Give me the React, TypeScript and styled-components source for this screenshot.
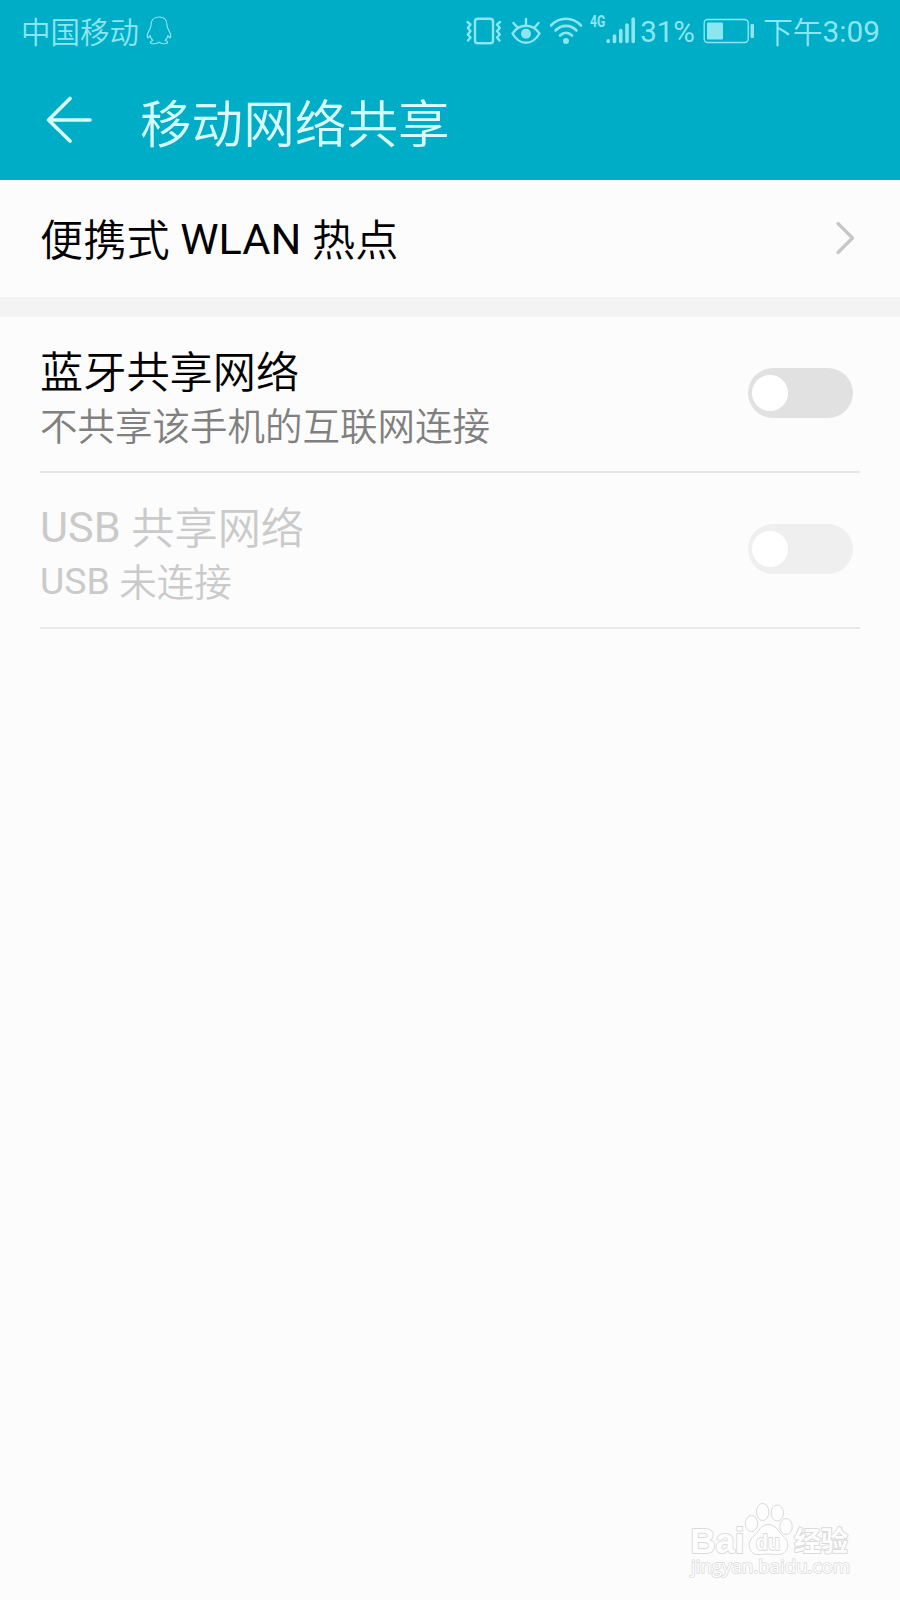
import React from "react";
import styled, { createGlobalStyle } from "styled-components";

const GlobalStyle = createGlobalStyle`
  *, *::before, *::after { box-sizing: border-box; }
  html, body { margin: 0; padding: 0; background: #fcfcfc; }
  body { font-family: Roboto, "Noto Sans CJK SC", sans-serif; }
`;

const Screen = styled.div`
  position: relative;
  display: flex;
  flex-direction: column;
  width: 900px;
  height: 1600px;
  overflow: hidden;
  background: #fcfcfc;
`;

const Header = styled.header`
  display: flex;
  flex-direction: column;
  height: 180px;
  background: #00adc7;
`;

const StatusBar = styled.div`
  display: flex;
  align-items: center;
  justify-content: space-between;
  height: 62px;
  padding: 0 20px 0 21px;
  color: #8ce6f0;
`;

const StatusGroup = styled.div`
  display: flex;
  align-items: center;
  white-space: nowrap;
`;

const StatusText = styled.span<{ $left?: number; $size?: number }>`
  margin-left: ${({ $left = 0 }) => $left}px;
  padding-top: 2px;
  font-size: ${({ $size = 29.5 }) => $size}px;
  line-height: 60px;
`;

const Han = styled.span<{ $drop?: number }>`
  font-weight: 350;
  line-height: 1;
  vertical-align: -${({ $drop = 2 }) => $drop}px;
`;

const StatusIcon = styled.svg<{ $left?: number; $lift?: number }>`
  display: block;
  flex: none;
  margin-left: ${({ $left = 0 }) => $left}px;
  margin-bottom: ${({ $lift = 0 }) => $lift}px;
  fill: none;
  stroke: currentColor;
  stroke-linecap: round;
  stroke-linejoin: round;
`;

const NetworkType = styled.span`
  align-self: flex-start;
  margin: 14px 0 0 7px;
  width: 16px;
  font-size: 16px;
  font-weight: 700;
  line-height: 16px;
  transform: scaleX(0.76);
  transform-origin: left;
`;

const TitleBar = styled.div`
  display: flex;
  align-items: center;
  height: 118px;
  padding-left: 46px;
`;

const BackIcon = styled.svg`
  display: block;
  flex: none;
  margin-bottom: 2px;
  fill: none;
  stroke: #d8fcff;
  stroke-width: 3.6;
  stroke-linecap: round;
  stroke-linejoin: round;
`;

const Title = styled.h1`
  margin: 10px 0 0 46px;
  color: #d8fcff;
  font-size: 51.6px;
  font-weight: 350;
  line-height: 72px;
`;

const LinkRow = styled.div`
  display: flex;
  align-items: center;
  justify-content: space-between;
  height: 117px;
  padding: 2px 45px 0 40px;
`;

const SectionGap = styled.div`
  height: 20px;
  background: #f3f3f3;
`;

const List = styled.div`
  display: flex;
  flex-direction: column;
  padding: 0 40px;
`;

const Row = styled.div`
  display: flex;
  align-items: center;
  justify-content: space-between;
  height: 156px;
  padding-right: 7px;
  border-bottom: 2px solid #e8e8e8;
`;

const Label = styled.div<{ $disabled?: boolean }>`
  color: ${({ $disabled }) => ($disabled ? "#cacaca" : "#000")};
  font-size: 43.2px;
  line-height: 60px;
  white-space: nowrap;
`;

const Summary = styled.div<{ $disabled?: boolean }>`
  margin-top: -1px;
  color: ${({ $disabled }) => ($disabled ? "#cacaca" : "#808080")};
  font-size: 37.5px;
  line-height: 48px;
  white-space: nowrap;
`;

const Copy = styled.div`
  display: flex;
  flex-direction: column;
  margin-top: 2px;
`;

const Track = styled.div<{ $disabled?: boolean }>`
  display: flex;
  align-items: center;
  width: 105px;
  height: 50px;
  margin-bottom: 2px;
  padding-left: 4px;
  border-radius: 25px;
  background: ${({ $disabled }) => ($disabled ? "#efefef" : "#e1e1e1")};
`;

const Thumb = styled.div`
  width: 36px;
  height: 36px;
  border-radius: 50%;
  background: #fff;
`;

const Chevron = styled.svg`
  display: block;
  margin-bottom: 4px;
  fill: none;
  stroke: #c6c6c6;
  stroke-width: 3.2;
  stroke-linecap: round;
  stroke-linejoin: round;
`;

const Watermark = styled.svg`
  position: absolute;
  left: 680px;
  top: 1496px;
  fill: #fefefe;
  stroke: #dadada;
  stroke-width: 1;
`;

const MarkText = styled.text<{ $size: number; $weight?: number; $family?: string; $outline?: number }>`
  font-family: ${({ $family = '"Liberation Sans"' }) => $family}, "Noto Sans CJK SC", sans-serif;
  font-size: ${({ $size }) => $size}px;
  font-weight: ${({ $weight = 400 }) => $weight};
  stroke-width: ${({ $outline = 1 }) => $outline}px;
  stroke-linejoin: round;
  paint-order: stroke;
`;

type SettingProps = { label: React.ReactNode; summary: React.ReactNode; disabled?: boolean };

function Setting({ label, summary, disabled }: SettingProps) {
  return (
    <Row>
      <Copy>
        <Label $disabled={disabled}>{label}</Label>
        <Summary $disabled={disabled}>{summary}</Summary>
      </Copy>
      <Track $disabled={disabled} role="switch" aria-checked={false} aria-disabled={disabled}>
        <Thumb />
      </Track>
    </Row>
  );
}

export default function App() {
  return (
    <>
      <GlobalStyle />
      <Screen>
        <Header>
          <StatusBar>
            <StatusGroup>
              <StatusText><Han $drop={1}>中国移动</Han></StatusText>
              <StatusIcon $left={7} $lift={2} width="26" height="30" viewBox="0 0 26 30" strokeWidth="1.2">
                <path d="M13 2C7.500 2 5 5.500 5 10c0 1.500-.3 2.300-.9 3.500C3 16 1.200 18.500 1.300 21c0 1.500.6 2.200 1.300 1.500l1.500-1.800c.6 2.300 1.500 3.700 2.700 4.800-1.700.6-2.600 1.300-2.300 2.300.5 1.500 6.500 1.200 8.500-.5 2 1.700 8 2 8.500.5.3-1-.6-1.700-2.300-2.300 1.200-1.100 2.100-2.500 2.700-4.800l1.500 1.800c.7.7 1.300 0 1.300-1.500.1-2.500-1.700-5-2.800-7.500-.6-1.200-.9-2-.9-3.500C21 5.500 18.500 2 13 2Z" />
              </StatusIcon>
            </StatusGroup>
            <StatusGroup>
              <StatusIcon $lift={1} width="36" height="30" viewBox="0 0 36 30" strokeWidth="2.4">
                <rect x="9" y="2.8" width="18" height="24.4" rx="2.8" />
                <path d="M1.500 6 4.500 8.500 1.800 12 4.500 15 1.800 18.500 4.500 21.500 2 24.500M34 6 31 8.500 33.800 12 31 15 33.800 18.500 31 21.500 33.500 24.500" />
              </StatusIcon>
              <StatusIcon $left={9} width="30" height="30" viewBox="0 0 30 30" strokeWidth="2.4">
                <path d="M1.500 17.500C5 12.500 10 9.800 15 9.800s10 2.700 13.500 7.700C25 23.500 20.500 26.800 15 26.800S5 23.500 1.500 17.500ZM15 9V3M6 11 2.500 7M24 11l3.500-4" />
                <circle cx="15" cy="17.800" r="5" fill="currentColor" stroke="none" />
              </StatusIcon>
              <StatusIcon $left={8} $lift={1} width="34" height="30" viewBox="0 0 34 30" strokeWidth="2.6">
                <path d="M2 9.500C10.500.5 23.500.5 32 9.500M6.500 14.500C12.500 8.300 21.500 8.300 27.500 14.500M11 19.500c3.600-3.600 8.400-3.600 12 0" />
                <circle cx="17" cy="25" r="3" fill="currentColor" stroke="none" />
              </StatusIcon>
              <NetworkType>4G</NetworkType>
              <StatusIcon width="30" height="30" viewBox="0 0 30 30" strokeWidth="3.6">
                <path d="M2.200 24.800V25.500M8.500 20V25.500M14.800 14.500V25.500M21 9V25.500M27.200 3V25.500" />
              </StatusIcon>
              <StatusText $left={4}>31%</StatusText>
              <StatusIcon $left={8} $lift={1} width="52" height="30" viewBox="0 0 52 30" strokeWidth="1.4">
                <rect x="1.200" y="3.500" width="44" height="23" rx="3.500" />
                <rect x="4" y="6.500" width="16" height="17" rx="1" fill="currentColor" stroke="none" />
                <rect x="47.500" y="8" width="3.500" height="14" rx="1" fill="currentColor" stroke="none" />
              </StatusIcon>
              <StatusText $left={8} $size={29.8}><Han $drop={1}>下午</Han>3:09</StatusText>
            </StatusGroup>
          </StatusBar>
          <TitleBar>
            <BackIcon width="48" height="48" viewBox="0 0 48 48">
              <path d="M44 24H2.500M24 2.500 2.500 24 24 45" />
            </BackIcon>
            <Title>移动网络共享</Title>
          </TitleBar>
        </Header>
        <LinkRow>
          <Label><Han>便携式</Han> WLAN <Han>热点</Han></Label>
          <Chevron width="20" height="34" viewBox="0 0 20 34">
            <path d="M3 2.500 17.500 17 3 31.500" />
          </Chevron>
        </LinkRow>
        <SectionGap />
        <List>
          <Setting label={<Han>蓝牙共享网络</Han>} summary={<Han>不共享该手机的互联网连接</Han>} />
          <Setting label={<>USB <Han>共享网络</Han></>} summary={<>USB <Han>未连接</Han></>} disabled />
        </List>
        <Watermark width="190" height="90" viewBox="0 0 190 90">
          <MarkText x="10.500" y="57" $size={35} $weight={700} $outline={1.8} textLength="54" lengthAdjust="spacingAndGlyphs">Bai</MarkText>
          <ellipse cx="71.500" cy="27.500" rx="6.200" ry="8" />
          <ellipse cx="82.700" cy="16" rx="6.200" ry="8.500" />
          <ellipse cx="97.300" cy="17" rx="6.200" ry="8" />
          <ellipse cx="106" cy="30.500" rx="6.200" ry="8" />
          <path d="M88 28.500c-7 0-9 7-14 11.500-4 3.500-5.500 7-4.500 11.500 1.500 6 6.500 7.500 11 7 5-.6 10-.6 15 0 5 .5 10.500-1 12-7 1-4.500-.5-8-4.500-11.500C98 35.500 96 28.500 88 28.500Z" />
          <MarkText x="76" y="54" $size={22} $weight={700} $outline={1.8} textLength="24" lengthAdjust="spacingAndGlyphs">du</MarkText>
          <MarkText x="114" y="55" $size={27} $weight={700} $outline={2} textLength="54" lengthAdjust="spacingAndGlyphs">经验</MarkText>
          <MarkText x="11" y="77" $size={19} $family='"Open Sans"' $outline={1.6} textLength="159" lengthAdjust="spacingAndGlyphs">jingyan.baidu.com</MarkText>
        </Watermark>
      </Screen>
    </>
  );
}
